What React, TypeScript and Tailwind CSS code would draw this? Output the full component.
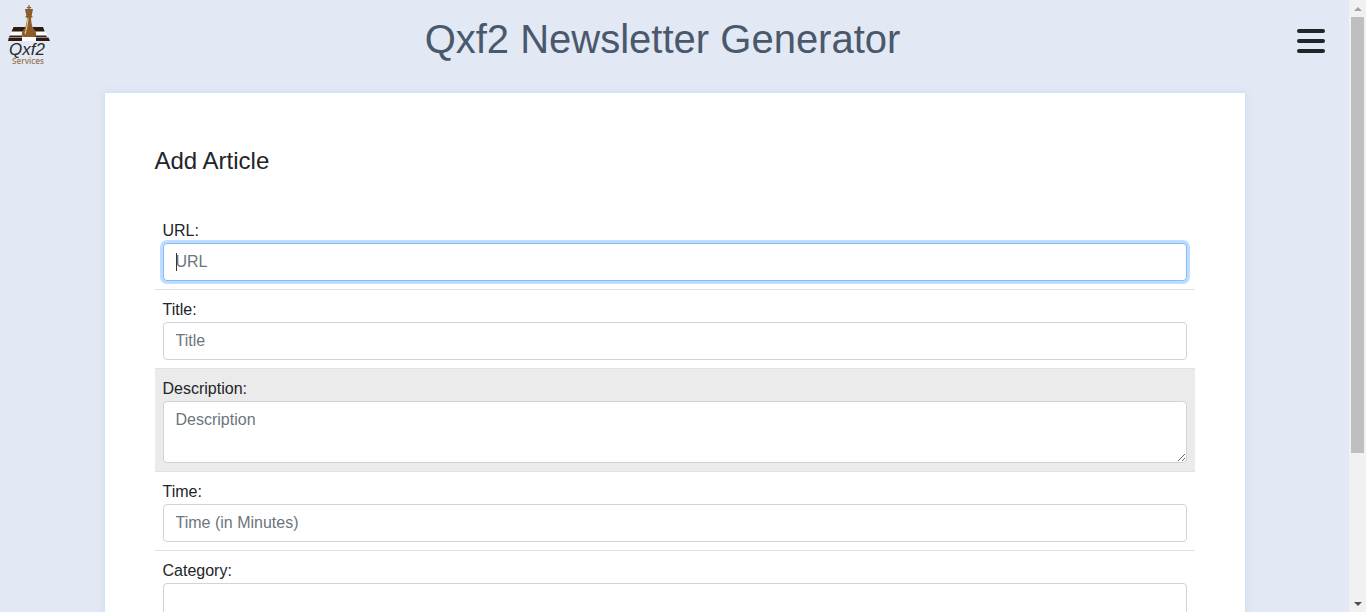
const fields = [
  { label: "Title:", placeholder: "Title" },
];

function Logo() {
  return (
    <svg width="52" height="66" viewBox="0 0 52 66" className="block">
      {/* board */}
      <path d="M13 27h30l7 14H8z" fill="#fff" />
      <path d="M13.500 27H25v4.500H11.500zM33 27h10l1.800 4.500H33z" fill="#2d1a10" />
      <path d="M9.800 35.500H22V37H9zM35 35.500h11.200l.8 1.500H35z" fill="#3a2416" />
      <path d="M8.800 37.500H22V41H8zM36 37.500h12.500L50 41H36z" fill="#2d1a10" />
      {/* king */}
      <path d="M28.400 5h1.200v2h1.600v1.200h-1.600v.8h3.400l-1.400 7h.8v1.500h-1.400c.2 4 .6 7 1.600 9.500 1 2.200 3.400 3.500 3.700 7l-.8 3H22.500l-.8-3c.3-3.500 2.700-4.800 3.700-7 1-2.500 1.400-5.500 1.600-9.500h-1.400V16h.8L25 9h3.400v-.8h-1.600V7h1.600z" fill="#8e5c2a" />
      <path d="M28 18c-.2 5-1 10-3 16" stroke="#e0c096" strokeWidth="1.200" fill="none" />
      <text x="9" y="55" fontFamily="'Liberation Sans', sans-serif" fontStyle="italic" fontSize="17" textLength="36" lengthAdjust="spacing" fill="#2a2a2a">Qxf2</text>
      <text x="12" y="63.500" fontFamily="'Open Sans', sans-serif" fontWeight="600" fontSize="9" textLength="32" lengthAdjust="spacingAndGlyphs" fill="#9a7a58">Services</text>
    </svg>
  );
}

function Row({ label, placeholder, className }: { label: string; placeholder: string; className?: string }) {
  return (
    <div className={"border-b border-[#dee2e6] p-2 " + (className ?? "")}>
      <label className="block text-base leading-6 text-[#212529]">{label}</label>
      <input
        placeholder={placeholder}
        className="block h-[38px] w-full rounded border border-[#ced4da] bg-white px-3 text-base text-[#495057] outline-none placeholder:text-[#6c757d]"
      />
    </div>
  );
}

function Scrollbar() {
  return (
    <div className="flex h-full w-[17px] shrink-0 flex-col items-center bg-[#f1f1f1]">
      <div className="flex h-[17px] items-center justify-center">
        <div className="h-0 w-0 border-x-[4px] border-b-[4px] border-x-transparent border-b-[#a3a3a3]" />
      </div>
      <div className="h-[436px] w-[13px] bg-[#bfbfbf]" />
      <div className="flex-1" />
      <div className="flex h-[17px] items-center justify-center">
        <div className="h-0 w-0 border-x-[4px] border-t-[4px] border-x-transparent border-t-[#505050]" />
      </div>
    </div>
  );
}

export default function App() {
  return (
    <div className="flex h-[612px] w-full overflow-hidden bg-[#e2e9f4] font-['Liberation_Sans',Arial,sans-serif]">
      <div className="min-w-0 flex-1">
        <header className="flex h-[93px] items-start justify-between pr-6">
          <Logo />
          <h1 className="pr-[24px] pt-[15px] text-[40px] leading-[48px] font-normal text-[#4a586c]">Qxf2 Newsletter Generator</h1>
          <div className="mt-[29px] flex w-7 flex-col gap-[6px]">
            <span className="h-1 rounded-sm bg-[#212529]" />
            <span className="h-1 rounded-sm bg-[#212529]" />
            <span className="h-1 rounded-sm bg-[#212529]" />
          </div>
        </header>
        <main className="mx-auto h-[600px] w-[1140px] bg-white px-[50px] pt-[53px] shadow-[0_0_6px_rgba(170,200,235,0.5)]">
          <h2 className="text-2xl leading-[29px] font-normal text-[#212529]">Add Article</h2>
          <div className="mt-[36px]">
            <div className="border-b border-[#dee2e6] p-2">
              <label className="block text-base leading-6 text-[#212529]">URL:</label>
              <div className="relative">
                <input
                  placeholder="URL"
                  className="block h-[38px] w-full rounded border border-[#80bdff] bg-white px-3 text-base text-[#495057] shadow-[0_0_0_3px_rgba(0,123,255,0.25)] outline-none placeholder:text-[#6c757d]"
                />
                <span className="absolute top-[10px] left-[13px] h-[18px] w-px bg-[#333]" />
              </div>
            </div>
            {fields.map((f) => (
              <Row key={f.label} label={f.label} placeholder={f.placeholder} />
            ))}
            <div className="border-b border-[#dee2e6] bg-[#ebebeb] p-2">
              <label className="block text-base leading-6 text-[#212529]">Description:</label>
              <textarea
                placeholder="Description"
                className="block h-[62px] w-full rounded border border-[#ced4da] bg-white px-3 py-[6px] text-base leading-6 text-[#495057] outline-none placeholder:text-[#6c757d]"
              />
            </div>
            <Row label="Time:" placeholder="Time (in Minutes)" />
            <Row label="Category:" placeholder="" />
          </div>
        </main>
      </div>
      <Scrollbar />
    </div>
  );
}
